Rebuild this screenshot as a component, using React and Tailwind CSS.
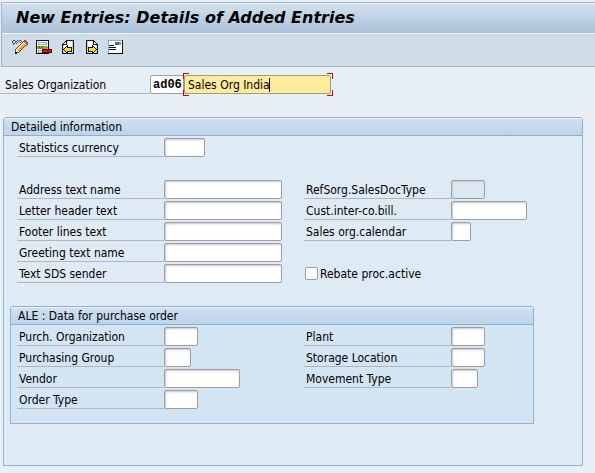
import React from 'react';

function Field({ id, label, width, disabled }) {
  return (
    <div className="flex h-[19px]">
      <label htmlFor={id} className="w-[147px] shrink-0 border-b border-[#b2b5ba] pl-[2px] leading-5 whitespace-nowrap">
        {label}
      </label>
      <input
        id={id}
        type="text"
        disabled={disabled}
        className={`h-[19px] rounded-[2px] border border-[#9b9fa5] px-[3px] outline-none shadow-[inset_1px_1px_2px_#c8c8cc] ${disabled ? 'bg-[#dce8f0]' : 'bg-white'} ${width}`}
      />
    </div>
  );
}

const palette = {
  k: '#101020',
  w: '#ffffff',
  g: '#c4cade',
  b: '#98a2c8',
  y: '#ffe800',
  o: '#ffa028',
  c: '#ffe4b0',
  n: '#7a4a18',
  r: '#e85048',
  s: '#44545e',
  l: '#7cac10',
  d: '#4c7408',
  x: '#ee0010',
  m: '#600008',
  t: '#18887c',
  e: '#a0906c',
};

function PixelIcon({ rows }) {
  return (
    <svg width="16" height="16" viewBox="0 0 16 16" shapeRendering="crispEdges" aria-hidden="true">
      {rows.flatMap((row, y) =>
        [...row].map((key, x) =>
          palette[key] ? <rect key={`${x}-${y}`} x={x} y={y} width="1" height="1" fill={palette[key]} /> : null,
        ),
      )}
    </svg>
  );
}

const pencil = [
  '................',
  '.ss..s.ss...nn..',
  's..ss.s..s.nrrn.',
  's..s.s..s.nwbrrn',
  '.ss.s....nccwbrn',
  '.s......nccoowbn',
  '.......nccooonn.',
  '......nccooon...',
  '.....nccooon....',
  '....nccooon.....',
  '...nccooon......',
  '...nwcoon.......',
  '...nwwcn........',
  '...kknn.........',
  '...kk...........',
  '................',
];

const remove = [
  '................',
  'kkkkkkkkkkkkk...',
  'kwwwwwwwwwwwk...',
  'kwbbbbbbbbbwk...',
  'kwbwwwwwwwbwk...',
  'kwbbbbbbbbbwk...',
  'kwwwwwwwwwwwk...',
  'klldlldllllgk...',
  'klldldllllllk...',
  'kllldllllllgk...',
  'kwwwwwmmmmmmmmmm',
  'kwbbbbmxxxxxxxxm',
  'kwbwwwmxxxxxxxxm',
  'kwbbbbmmmmmmmmmm',
  'kkkkkkkkkkkkk...',
  '................',
];

const next = [
  '................',
  '..kkkkkkkk......',
  '..kgwwwwwkk.....',
  '..kgwwwwwkwk....',
  '..kgwwwwwkwwk...',
  '..kgwwwwwkkkkk..',
  '..kgwwwwkwwwgk..',
  '..kgwwwwkkwwgk..',
  '..kgkkkkkykwgk..',
  '..kgkyyyyyykgk..',
  '..kgkyyyyyyykk..',
  '..kgkyyyyyykgk..',
  '..kgkkkkkykwgk..',
  '..kggwwwkkwwgk..',
  '..kkkkkkkkkkkk..',
  '................',
];

const previous = next.map((row) => [...row].reverse().join(''));

const letter = [
  '................',
  'bbbbbbbbbbbbbbk.',
  'bwwwwwwwwwwwwwk.',
  'bwwwwwwtttteewk.',
  'bwwwwwwtttteewk.',
  'bwwwwwwtttteewk.',
  'bkkkkkwwwwwwwwk.',
  'bwwwwwwwwwwwwwk.',
  'bkkkkkkkwwwwwwk.',
  'bwwwwwwwwwwwwwk.',
  'bkkkkkkkwwwwwwk.',
  'bwwwwwwwwwwwwwk.',
  'bwwwwwwwwwwwwwk.',
  'bwwwwwwwwwwwwwk.',
  'kkkkkkkkkkkkkkk.',
  '................',
];

const icons = [
  { name: 'Display/Change', rows: pencil },
  { name: 'Delete', rows: remove },
  { name: 'Previous entry', rows: previous },
  { name: 'Next entry', rows: next },
  { name: 'Position', rows: letter },
];

export default function App() {
  return (
    <div className="min-h-screen bg-[#e8eff7] pt-[2px] font-['DejaVu_Sans_Condensed','DejaVu_Sans',sans-serif] text-[12px] text-black">
      <header className="ml-px border-t border-l border-[#9db2c4]">
        <h1 className="h-[31px] border-t border-b border-[#f0f5fa] bg-linear-to-b from-[#d2e0ec] to-[#abc2da] pl-[14px] font-['DejaVu_Sans',sans-serif] text-[16px] leading-[27px] font-bold whitespace-nowrap italic">
          New Entries: Details of Added Entries
        </h1>
        <div role="toolbar" aria-label="Entries" className="flex h-[33px] gap-2 border-b border-[#a3b5c6] bg-[#cfdce6] pt-[5px] pl-[10px]">
          {icons.map((icon) => (
            <button key={icon.name} type="button" aria-label={icon.name} title={icon.name} className="size-4">
              <PixelIcon rows={icon.rows} />
            </button>
          ))}
        </div>
      </header>

      <main className="pb-[7px]">
        <div className="mt-2 flex h-[19px]">
          <label htmlFor="org" className="w-[150px] border-b border-[#b2b5ba] pl-[5px] leading-5">
            Sales Organization
          </label>
          <input
            id="org"
            defaultValue="ad06"
            className="w-[34px] rounded-[2px] border border-[#9b9fa5] bg-white pl-[2px] font-['Liberation_Mono',monospace] text-[12px] font-bold outline-none"
          />
          <div className="relative">
            <input
              aria-label="Sales organization name"
              defaultValue="Sales Org India"
              className="block h-[19px] w-[147px] rounded-[2px] border border-[#a09a80] bg-[#ffeb9c] pl-[3px] outline-none"
            />
            <span className="absolute -top-[2px] -left-px size-[6px] border-t border-l border-[#d80000]" />
            <span className="absolute -top-[2px] -right-[2px] size-[6px] border-t border-r border-[#d80000]" />
            <span className="absolute -bottom-[2px] -left-px size-[6px] border-b border-l border-[#d80000]" />
            <span className="absolute -right-[2px] -bottom-[2px] size-[6px] border-r border-b border-[#d80000]" />
            <span className="absolute top-[3px] left-[85px] h-[14px] w-px bg-black" />
          </div>
        </div>

        <section className="mt-[23px] mr-3 ml-[3px] rounded-t-[3px] border border-[#8fb0d2] bg-[#deeaf4] pb-[41px]">
          <h2 className="h-[18px] rounded-t-[2px] border-t border-b border-t-[#eef4fa] border-b-[#8fadce] bg-linear-to-b from-[#cfdfee] to-[#bdd4ea] pl-[7px] leading-4">
            Detailed information
          </h2>
          <div className="pt-[2px] pl-[13px]">
            <Field id="currency" label="Statistics currency" width="w-[41px]" />
          </div>
          <div className="mt-[23px] grid grid-cols-[287px_1fr] pl-[13px]">
            <div className="flex flex-col gap-[2px]">
              <Field id="address" label="Address text name" width="w-[118px]" />
              <Field id="letter" label="Letter header text" width="w-[118px]" />
              <Field id="footer" label="Footer lines text" width="w-[118px]" />
              <Field id="greeting" label="Greeting text name" width="w-[118px]" />
              <Field id="sds" label="Text SDS sender" width="w-[118px]" />
            </div>
            <div className="flex flex-col gap-[2px]">
              <Field id="doctype" label="RefSorg.SalesDocType" width="w-[34px]" disabled />
              <Field id="bill" label="Cust.inter-co.bill." width="w-[76px]" />
              <Field id="calendar" label="Sales org.calendar" width="w-[20px]" />
              <label className="mt-[21px] flex h-[19px] items-center gap-[2px] pl-px">
                <input type="checkbox" className="size-[13px] appearance-none rounded-[2px] border border-[#9b9fa5] bg-white" />
                Rebate proc.active
              </label>
            </div>
          </div>

          <section className="mt-[23px] mr-[48px] ml-[6px] rounded-t-[3px] border border-[#8fb0d2] bg-[#d3e4f2] pb-[14px]">
            <h3 className="h-[18px] rounded-t-[2px] border-t border-b border-t-[#eef4fa] border-b-[#8fadce] bg-linear-to-b from-[#cfdfee] to-[#bdd4ea] pl-[7px] leading-4">
              ALE : Data for purchase order
            </h3>
            <div className="grid grid-cols-[287px_1fr] pt-[2px] pl-[6px]">
              <div className="flex flex-col gap-[2px]">
                <Field id="purchorg" label="Purch. Organization" width="w-[34px]" />
                <Field id="group" label="Purchasing Group" width="w-[27px]" />
                <Field id="vendor" label="Vendor" width="w-[76px]" />
                <Field id="order" label="Order Type" width="w-[34px]" />
              </div>
              <div className="flex flex-col gap-[2px]">
                <Field id="plant" label="Plant" width="w-[34px]" />
                <Field id="storage" label="Storage Location" width="w-[34px]" />
                <Field id="movement" label="Movement Type" width="w-[27px]" />
              </div>
            </div>
          </section>
        </section>
      </main>
    </div>
  );
}
